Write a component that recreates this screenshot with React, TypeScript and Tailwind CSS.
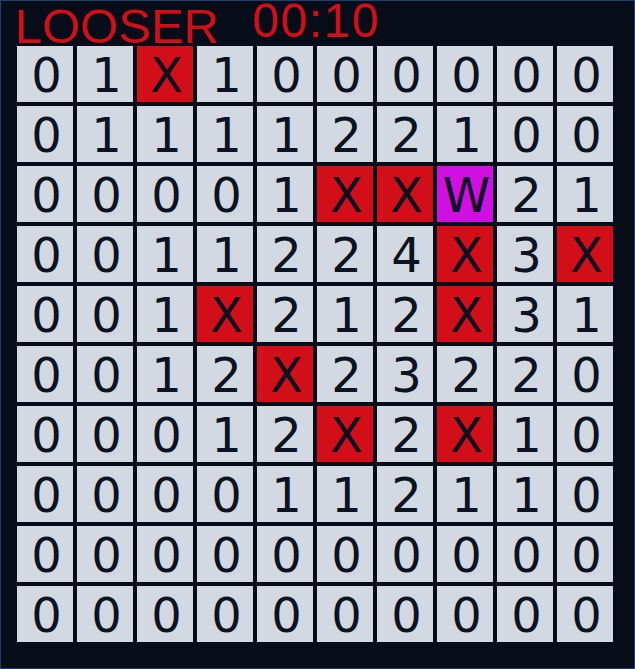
import React from 'react';

const BOARD: string[][] = [
  ['0', '1', 'X', '1', '0', '0', '0', '0', '0', '0'],
  ['0', '1', '1', '1', '1', '2', '2', '1', '0', '0'],
  ['0', '0', '0', '0', '1', 'X', 'X', 'W', '2', '1'],
  ['0', '0', '1', '1', '2', '2', '4', 'X', '3', 'X'],
  ['0', '0', '1', 'X', '2', '1', '2', 'X', '3', '1'],
  ['0', '0', '1', '2', 'X', '2', '3', '2', '2', '0'],
  ['0', '0', '0', '1', '2', 'X', '2', 'X', '1', '0'],
  ['0', '0', '0', '0', '1', '1', '2', '1', '1', '0'],
  ['0', '0', '0', '0', '0', '0', '0', '0', '0', '0'],
  ['0', '0', '0', '0', '0', '0', '0', '0', '0', '0'],
];

function Cell({ value }: { value: string }) {
  // mine = red, the one that was hit = purple
  const bg =
    value === 'X' ? 'bg-[#d20f19]' : value === 'W' ? 'bg-[#d010e2]' : 'bg-[#d2d9e3]';
  return (
    <div
      className={`${bg} w-[56px] h-[56px] flex items-center justify-center pt-[2px] pl-[3px] text-[#0b1320] text-[48px] leading-none font-['DejaVu_Sans',sans-serif]`}
    >
      {value}
    </div>
  );
}

export default function App() {
  return (
    <div className="w-[635px] h-[669px] bg-[#060d18] border border-[#1b406d] pl-4 font-['Liberation_Sans',Arial,sans-serif]">
      {/* Status bar */}
      <div className="h-[45px] flex items-start text-[#d20f19]">
        <span className="-ml-[2px] mt-[5px] text-[49px] leading-[40px]">LOOSER</span>
        <span className="ml-[33px] text-[48px] leading-[40px] tracking-[1.5px]">00:10</span>
      </div>

      {/* Board */}
      <div className="grid grid-cols-10 gap-[4px] w-[596px]">
        {BOARD.map((row, r) =>
          row.map((v, c) => <Cell key={`${r}-${c}`} value={v} />)
        )}
      </div>
    </div>
  );
}
